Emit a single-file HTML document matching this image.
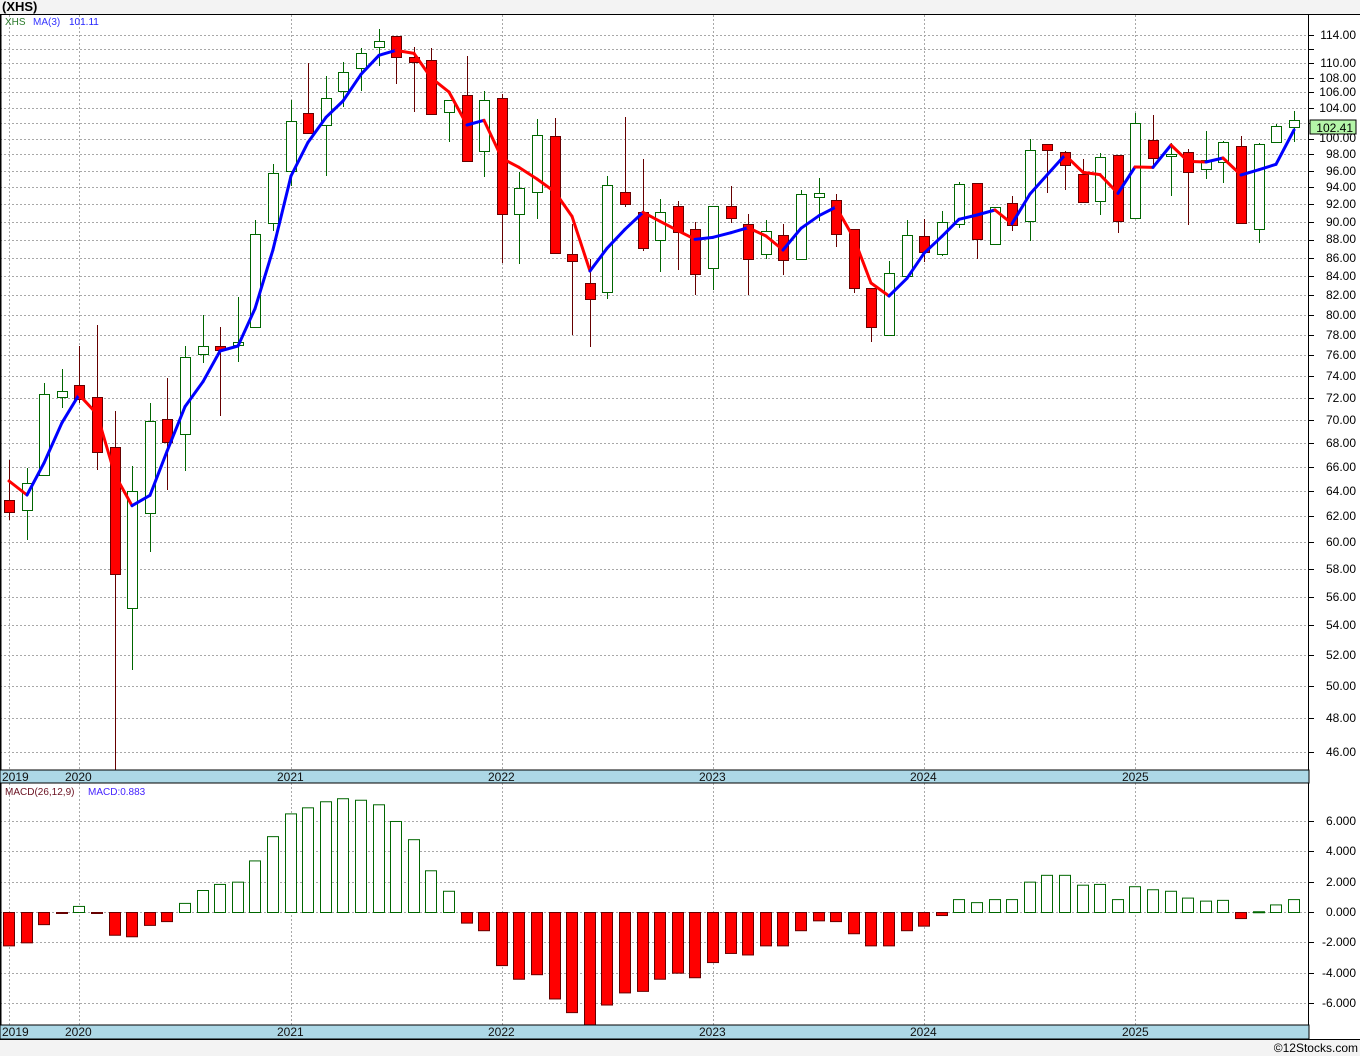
<!DOCTYPE html>
<html><head><meta charset="utf-8"><style>
html,body{margin:0;padding:0;background:#f3f3f3;width:1360px;height:1056px;overflow:hidden}
svg{display:block;font-family:"Liberation Sans",sans-serif}
</style></head><body>
<svg id="s" width="1360" height="1056" xmlns="http://www.w3.org/2000/svg">
<rect x="0" y="0" width="1360" height="1056" fill="#f3f3f3"/>
<rect x="0" y="14" width="1360" height="1025" fill="#fff"/>
<g id="grid" stroke="#a8a8a8" stroke-dasharray="2,2" stroke-width="1"></g>
<g id="bars"></g>
<g id="cand"></g>
<g id="ma" fill="none" stroke-width="3" stroke-linejoin="round" stroke-linecap="round"></g>
<line x1="0" y1="14.5" x2="1360" y2="14.5" stroke="#000"/>
<line x1="0.5" y1="14" x2="0.5" y2="1039" stroke="#000" stroke-width="2"/>
<line x1="1308.5" y1="14" x2="1308.5" y2="1039" stroke="#000"/>
<rect x="0" y="770" width="1309" height="13" fill="#add8e6" stroke="#000" stroke-width="1"/>
<rect x="0" y="1025" width="1309" height="14" fill="#add8e6" stroke="#000" stroke-width="1"/>
<line x1="0" y1="1039.5" x2="1360" y2="1039.5" stroke="#000"/>
<g font-size="12" fill="#111">
<text x="2" y="781">2019</text><text x="65" y="781">2020</text><text x="277" y="781">2021</text><text x="488" y="781">2022</text><text x="699" y="781">2023</text><text x="910" y="781">2024</text><text x="1122" y="781">2025</text>
<text x="2" y="1036">2019</text><text x="65" y="1036">2020</text><text x="277" y="1036">2021</text><text x="488" y="1036">2022</text><text x="699" y="1036">2023</text><text x="910" y="1036">2024</text><text x="1122" y="1036">2025</text>
</g>
<text x="2" y="11" font-size="13" font-weight="bold" fill="#000">(XHS)</text>
<text x="5" y="25" font-size="10" fill="#2a7a2a">XHS</text>
<text x="33" y="25" font-size="10" fill="#3333ff">MA(3)</text>
<text x="69" y="25" font-size="10" fill="#2222ff">101.11</text>
<text x="5" y="795" font-size="10" fill="#6a1020">MACD(26,12,9)</text>
<text x="88" y="795" font-size="10" fill="#4422ff">MACD:0.883</text>
<g id="ticks" stroke="#000"></g>
<g font-size="12" fill="#000" text-anchor="end">
<text x="1356" y="39">114.00</text><text x="1356" y="67">110.00</text><text x="1356" y="82">108.00</text><text x="1356" y="96">106.00</text><text x="1356" y="112">104.00</text><text x="1356" y="142">100.00</text>
<text x="1356" y="158">98.00</text><text x="1356" y="175">96.00</text><text x="1356" y="191">94.00</text><text x="1356" y="208">92.00</text><text x="1356" y="226">90.00</text><text x="1356" y="243">88.00</text><text x="1356" y="262">86.00</text><text x="1356" y="280">84.00</text><text x="1356" y="299">82.00</text><text x="1356" y="319">80.00</text><text x="1356" y="339">78.00</text><text x="1356" y="359">76.00</text><text x="1356" y="380">74.00</text><text x="1356" y="402">72.00</text><text x="1356" y="424">70.00</text><text x="1356" y="447">68.00</text><text x="1356" y="471">66.00</text><text x="1356" y="495">64.00</text><text x="1356" y="520">62.00</text><text x="1356" y="546">60.00</text><text x="1356" y="573">58.00</text><text x="1356" y="601">56.00</text><text x="1356" y="629">54.00</text><text x="1356" y="659">52.00</text><text x="1356" y="690">50.00</text><text x="1356" y="722">48.00</text><text x="1356" y="756">46.00</text>
<text x="1356" y="825">6.000</text><text x="1356" y="855">4.000</text><text x="1356" y="886">2.000</text><text x="1356" y="916">0.000</text><text x="1356" y="946">-2.000</text><text x="1356" y="977">-4.000</text><text x="1356" y="1007">-6.000</text>
</g>
<rect x="1310" y="120" width="46" height="14" fill="#b4f5a8" stroke="#000"/>
<text x="1353" y="132" font-size="12" text-anchor="end" fill="#000">102.41</text>
<text x="1358" y="1052" font-size="12" text-anchor="end" fill="#000">©12Stocks.com</text>
</svg>
<script>
var NS="http://www.w3.org/2000/svg";
function el(p,t,a){var e=document.createElementNS(NS,t);for(var k in a)e.setAttribute(k,a[k]);p.appendChild(e);return e;}
var G=document.getElementById('grid'),T=document.getElementById('ticks');
for(var p=46;p<=114;p+=2){var y=Math.round(35+790*Math.log(114/p))+0.5;el(G,'line',{x1:0,y1:y,x2:1308,y2:y});el(T,'line',{x1:1309,y1:y,x2:1314,y2:y});}
[821,851,882,912,942,973,1003].forEach(function(y){y+=0.5;el(G,'line',{x1:0,y1:y,x2:1308,y2:y});el(T,'line',{x1:1309,y1:y,x2:1314,y2:y});});
[9,79,291,502,713,924,1135].forEach(function(x){x+=0.5;el(G,'line',{x1:x,y1:15,x2:x,y2:770});el(G,'line',{x1:x,y1:783,x2:x,y2:1025});});
var D=[[500,512,460,520,1],[483,510,468,540,0],[394,475,383,475,0],[391,397,369,408,0],[385,399,346,403,1],[397,452,325,470,1],[447,574,411,770,1],[491,608,466,670,0],[421,513,403,552,0],[419,442,378,490,1],[357,434,346,471,0],[346,354,315,363,0],[346,350,327,416,1],[342,345,297,362,0],[234,327,220,327,0],[173,223,164,231,0],[121,171,100,186,0],[113,133,63,133,1],[98,125,76,176,0],[72,91,62,107,0],[53,68,48,91,0],[41,47,29,66,0],[36,57,36,84,1],[57,62,47,112,1],[60,114,48,114,1],[100,112,100,142,0],[95,161,56,161,1],[100,151,91,177,0],[98,214,94,263,1],[188,214,172,264,0],[135,192,119,219,0],[136,253,118,253,1],[254,261,224,335,1],[283,299,259,347,1],[185,292,176,299,0],[192,204,117,207,1],[212,248,159,251,1],[212,240,199,272,0],[206,232,201,270,1],[229,274,222,295,1],[206,268,206,290,0],[206,218,186,223,1],[224,259,214,295,1],[231,254,220,259,0],[235,260,224,275,1],[194,259,190,259,0],[193,197,178,221,0],[200,234,194,247,1],[229,288,229,293,1],[288,327,288,342,1],[273,335,261,335,0],[235,276,220,276,0],[236,252,219,262,1],[222,254,211,256,0],[184,224,182,228,0],[183,239,183,259,1],[207,244,207,245,0],[203,225,196,231,1],[150,221,139,241,0],[144,150,144,193,1],[152,165,151,190,1],[174,202,159,202,1],[157,201,153,215,0],[155,221,155,233,1],[123,218,113,218,0],[140,158,115,167,1],[154,156,143,196,0],[152,172,149,225,1],[160,169,131,179,0],[142,162,141,183,0],[146,223,136,223,1],[144,229,143,243,0],[126,142,124,142,0],[120,127,111,142,0]];
var M=[-2.2,-2.0,-0.8,-0.05,0.4,-0.05,-1.5,-1.6,-0.85,-0.6,0.6,1.45,1.85,2.0,3.4,5.0,6.5,6.9,7.3,7.5,7.4,7.1,6.0,4.8,2.75,1.4,-0.7,-1.2,-3.5,-4.4,-4.1,-5.7,-6.6,-7.5,-6.1,-5.3,-5.2,-4.4,-4.0,-4.3,-3.3,-2.7,-2.8,-2.2,-2.2,-1.2,-0.55,-0.6,-1.4,-2.2,-2.2,-1.2,-0.9,-0.2,0.85,0.65,0.85,0.85,2.0,2.45,2.45,1.8,1.85,0.85,1.7,1.5,1.4,0.95,0.75,0.8,-0.4,0.05,0.5,0.85];
var C=document.getElementById('cand'),B=document.getElementById('bars'),MA=document.getElementById('ma');
var cl=[],xs=[];
D.forEach(function(d,i){var x=Math.round(9+17.6*i),r=d[4];xs.push(x);
 var sc=r?'#600':'#060';
 el(C,'line',{x1:x+0.5,y1:d[2],x2:x+0.5,y2:d[3],stroke:sc,'stroke-width':1});
 var h=Math.max(d[1]-d[0],2);
 el(C,'rect',{x:x-4.5,y:d[0]+0.5,width:10,height:h,fill:r?'#f00':'#fff',stroke:sc,'stroke-width':1});
 cl.push(r?d[1]:d[0]);
 var v=M[i],yb=912,yt=Math.max(912-v*15.17,783);var yy=Math.min(yt,1025);
 var top=Math.min(yb,yy),hh=Math.abs(yy-yb);if(hh<1)hh=1;
 el(B,'rect',{x:x-5.5,y:top+0.5,width:11,height:hh,fill:v<0?'#f00':'#fff',stroke:v<0?'#600':'#060','stroke-width':1});
});
var mv=[481,495];for(var i=2;i<cl.length;i++)mv.push((cl[i]+cl[i-1]+cl[i-2])/3);
for(var i=1;i<mv.length;i++){el(MA,'line',{x1:xs[i-1],y1:mv[i-1],x2:xs[i],y2:mv[i],stroke:mv[i]>mv[i-1]?'#f00':'#00f'});}
</script>
</body></html>
